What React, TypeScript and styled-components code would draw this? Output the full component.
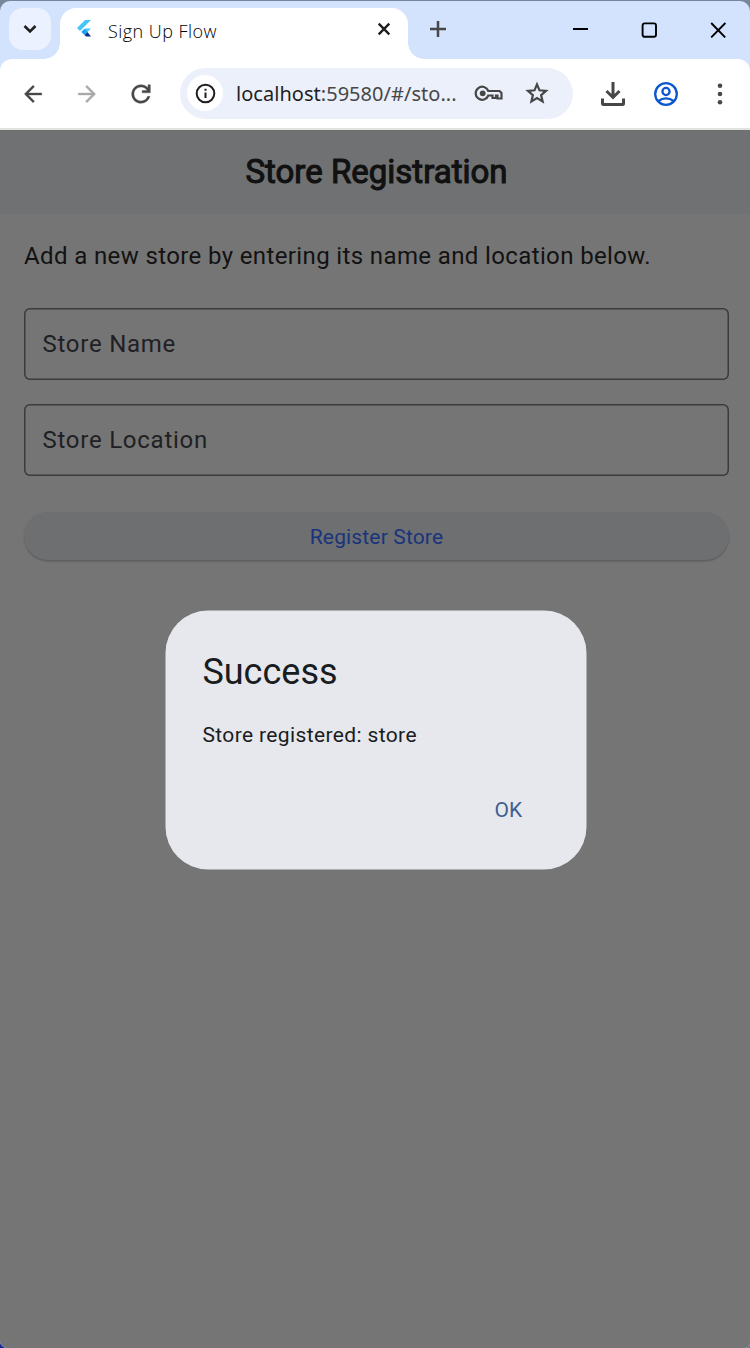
import React from "react";
import styled, { createGlobalStyle } from "styled-components";

const GlobalStyle = createGlobalStyle`
  * { box-sizing: border-box; }
  html, body { margin: 0; padding: 0; background: #75889b; }
  button { border: 0; padding: 0; background: none; font: inherit; }
  svg { display: block; flex: none; }
`;

const Desktop = styled.div`
  width: 750px;
  height: 1348px;
  padding-top: 1px;
  background: linear-gradient(90deg, #14249a 0 50%, #6d7690 50%) bottom / 100% 30px no-repeat #75889b;
`;

const BrowserWindow = styled.div`
  position: relative;
  height: 1347px;
  display: flex;
  flex-direction: column;
  border-radius: 10px 10px 5px 7px;
  overflow: hidden;
  background: #d3e2fd;
`;

const TabStrip = styled.div`
  height: 58px;
  display: flex;
  align-items: flex-end;
  padding-left: 9px;
`;

const TabSearch = styled.button`
  width: 42px;
  height: 42px;
  margin: 0 9px 9px 0;
  border-radius: 14px;
  background: #ebf1fe;
  display: grid;
  place-items: center;
`;

const Tab = styled.div`
  position: relative;
  width: 348px;
  height: 51px;
  display: flex;
  align-items: center;
  padding: 0 17px 9px 15px;
  border-radius: 16px 16px 0 0;
  background: #fff;
  &::before, &::after {
    content: "";
    position: absolute;
    bottom: 0;
    width: 16px;
    height: 16px;
  }
  &::before {
    left: -16px;
    background: radial-gradient(circle at 0 0, transparent 15.5px, #fff 16px);
  }
  &::after {
    right: -16px;
    background: radial-gradient(circle at 100% 0, transparent 15.5px, #fff 16px);
  }
`;

const TabTitle = styled.span`
  flex: 1;
  margin-left: 14px;
  padding-top: 4px;
  font: 300 18px/26px "Open Sans", sans-serif;
  letter-spacing: 0.45px;
  color: #000;
  white-space: nowrap;
`;

const NewTab = styled.button`
  margin: 0 0 22px 22px;
`;

const WindowControls = styled.div`
  margin: 0 24px 21px auto;
  display: flex;
  align-items: center;
  gap: 53px;
`;

const Toolbar = styled.div`
  height: 71px;
  flex: none;
  display: flex;
  align-items: center;
  padding: 1px 18px 0 20px;
  border-radius: 12px 12px 0 0;
  border-bottom: 2px solid #e1e3df;
  background: #fff;
`;

const ToolButton = styled.button<{ $gap?: number }>`
  margin-right: ${(p) => p.$gap ?? 0}px;
`;

const AddressBar = styled.div`
  width: 393px;
  height: 51px;
  margin: 0 28px 2px 0;
  display: flex;
  align-items: center;
  padding: 0 24px 0 7px;
  border-radius: 26px;
  background: #ebf0fa;
`;

const SiteInfo = styled.span`
  width: 36px;
  height: 36px;
  border-radius: 50%;
  display: grid;
  place-items: center;
  background: #fff;
`;

const Url = styled.span`
  flex: 1;
  margin-left: 13px;
  padding-top: 1px;
  font: 400 20px/28px "Noto Sans", sans-serif;
  letter-spacing: 0.03px;
  color: #474747;
  white-space: nowrap;
`;

const Host = styled.span`
  color: #1f1f1f;
`;

const Page = styled.main`
  position: relative;
  flex: 1;
  background: #757575;
  font-family: Roboto, sans-serif;
`;

const AppBar = styled.header`
  height: 84px;
  display: flex;
  align-items: center;
  justify-content: center;
  background: #707173;
`;

const AppTitle = styled.h1`
  margin: 0 0 0 3px;
  font-size: 33px;
  font-weight: 400;
  line-height: 42px;
  color: #111;
  -webkit-text-stroke: 1.1px #111;
`;

const Form = styled.div`
  display: flex;
  flex-direction: column;
  padding: 24px 21px 0 24px;
`;

const Intro = styled.p`
  margin: 0 0 34.4px;
  font-size: 24px;
  line-height: 36px;
  letter-spacing: 0.375px;
  color: #121212;
`;

const Field = styled.div`
  height: 72px;
  margin-bottom: 24px;
  padding: 0 18.5px;
  display: flex;
  align-items: center;
  box-shadow: inset 0 0 0 1.5px #3a3b3e;
  border-radius: 6px;
  font-size: 24px;
  letter-spacing: 0.75px;
  color: #1f2023;
`;

const RegisterButton = styled.button`
  height: 48px;
  margin-top: 11.6px;
  padding-top: 1px;
  border-radius: 24px;
  background: #6d6f71;
  box-shadow: 0 1.5px 1.5px rgba(0, 0, 0, 0.2);
  font-size: 21px;
  line-height: 48px;
  letter-spacing: 0.15px;
  color: #19347c;
`;

const Dialog = styled.section`
  position: absolute;
  left: 166.4px;
  top: 481.4px;
  width: 420px;
  height: 258px;
  padding: 37px 36px 35px;
  display: flex;
  flex-direction: column;
  border-radius: 42px;
  background: #e6e8ed;
  box-shadow: 0 0 0 0.5px #e6e8ed;
  color: #191c20;
`;

const DialogTitle = styled.h2`
  margin: 0 0 24px;
  font-size: 36px;
  font-weight: 400;
  line-height: 48px;
`;

const DialogText = styled.p`
  margin: 0;
  font-size: 21px;
  line-height: 30px;
  letter-spacing: 0.375px;
`;

const DialogAction = styled.button`
  align-self: flex-end;
  margin: 45px 28px 0 0;
  font-size: 21px;
  line-height: 30px;
  letter-spacing: 0.15px;
  color: #415f91;
`;

const ChevronIcon = () => (
  <svg width="14" height="10" viewBox="0 0 14 10" fill="none" stroke="#1f1f1f" strokeWidth="2.6">
    <path d="M1.500 2 7 7.500 12.500 2" />
  </svg>
);

const FlutterIcon = () => (
  <svg width="19" height="22" viewBox="0 0 19 22">
    <path fill="#47c5fb" d="M10 2h6L5 13l-3-3z" />
    <path fill="#47c5fb" d="M10 10.500h6L12.500 14h-6z" />
    <path fill="#0a2f8a" d="m9.500 17 3-3 3.500 4.500h-5z" />
    <path fill="#1b9ff0" d="m6.300 14 3-3 3.200 3-3 3z" />
  </svg>
);

const CloseTabIcon = () => (
  <svg width="14" height="14" viewBox="0 0 14 14" stroke="#1f1f1f" strokeWidth="2.4">
    <path d="m1.700 1.700 10.600 10.600M12.300 1.700 1.700 12.300" />
  </svg>
);

const PlusIcon = () => (
  <svg width="16" height="16" viewBox="0 0 16 16" stroke="#474747" strokeWidth="2.5">
    <path d="M8 0v16M0 8h16" />
  </svg>
);

const MinimizeIcon = () => (
  <svg width="16" height="16" viewBox="0 0 16 16" stroke="#000" strokeWidth="2">
    <path d="M1 7h15" />
  </svg>
);

const MaximizeIcon = () => (
  <svg width="16" height="16" viewBox="0 0 16 16" fill="none" stroke="#000" strokeWidth="1.9">
    <rect x="1.600" y="1.400" width="13.400" height="13.400" rx="2" />
  </svg>
);

const CloseIcon = () => (
  <svg width="16" height="16" viewBox="0 0 16 16" stroke="#000" strokeWidth="1.9">
    <path d="m1.200 1 14 14.400M15.400 1 1.200 15.400" />
  </svg>
);

const BackIcon = () => (
  <svg width="26" height="26" viewBox="0 0 24 24" fill="#474747" stroke="#474747" strokeWidth="0.300">
    <path d="M20 11H7.800l5.600-5.600L12 4l-8 8 8 8 1.400-1.400L7.800 13H20z" />
  </svg>
);

const ForwardIcon = () => (
  <svg width="26" height="26" viewBox="0 0 24 24" fill="#a9a9a9" stroke="#a9a9a9" strokeWidth="0.300">
    <path d="m12 4-1.400 1.400 5.600 5.600H4v2h12.200l-5.600 5.600L12 20l8-8z" />
  </svg>
);

const ReloadIcon = () => (
  <svg width="28" height="28" viewBox="0 0 24 24" fill="#474747" stroke="#474747" strokeWidth="0.300">
    <path d="M12 20c-4.500 0-8-3.500-8-8s3.500-8 8-8c2.300 0 4.400.950 6 2.700V4h2v7h-7V9h4.200C16.200 7.200 14.200 6 12 6c-3.300 0-6 2.700-6 6s2.700 6 6 6c2.600 0 4.800-1.600 5.650-4h2.100C18.800 17.500 15.700 20 12 20z" />
  </svg>
);

const InfoIcon = () => (
  <svg width="22" height="22" viewBox="0 0 22 22" fill="none" stroke="#1f1f1f" strokeWidth="2">
    <circle cx="11.500" cy="11.500" r="8.800" />
    <path d="M11.500 10.500V16M11.500 6.800v2" />
  </svg>
);

const KeyIcon = () => (
  <svg width="29" height="18" viewBox="0 0 29 18" fill="none" stroke="#474747" strokeWidth="2.200">
    <path d="M14.300 7h11.200l2 2v5.500h-4v-3H22V14h-3.500v-2.500h-4.200A6.500 6.500 0 1 1 14.300 7z" />
    <circle cx="8.700" cy="9.300" r="2.900" fill="#474747" stroke="none" />
  </svg>
);

const StarIcon = () => (
  <svg width="24" height="24" viewBox="0 0 24 24" fill="none" stroke="#474747" strokeWidth="2.200">
    <path d="m12 3.300 2.500 6 6.500.550-4.900 4.250 1.500 6.300L12 17l-5.600 3.400 1.500-6.300L3 9.850l6.500-.550z" />
  </svg>
);

const DownloadIcon = () => (
  <svg width="24" height="24" viewBox="0 0 24 24" fill="none" stroke="#474747" strokeWidth="3">
    <path d="M12 0v15M5.500 9 12 15.500 18.500 9" />
    <path d="M1.500 16.500v5a1 1 0 0 0 1 1h19a1 1 0 0 0 1-1v-5" />
  </svg>
);

const ProfileIcon = () => (
  <svg width="24" height="24" viewBox="0 0 24 24" fill="none" stroke="#0b57d0" strokeWidth="2.300">
    <circle cx="12" cy="12" r="10.800" />
    <circle cx="12" cy="9.500" r="3.600" />
    <path d="M4.500 19c4.500-3.400 10.500-3.400 15 0" />
  </svg>
);

const MenuIcon = () => (
  <svg width="24" height="22" viewBox="0 0 24 22" fill="#474747">
    <circle cx="12" cy="2.800" r="2.300" />
    <circle cx="12" cy="11" r="2.300" />
    <circle cx="12" cy="19.200" r="2.300" />
  </svg>
);

export default function App() {
  return (
    <Desktop>
      <GlobalStyle />
      <BrowserWindow>
        <TabStrip>
          <TabSearch><ChevronIcon /></TabSearch>
          <Tab>
            <FlutterIcon />
            <TabTitle>Sign Up Flow</TabTitle>
            <CloseTabIcon />
          </Tab>
          <NewTab><PlusIcon /></NewTab>
          <WindowControls>
            <MinimizeIcon />
            <MaximizeIcon />
            <CloseIcon />
          </WindowControls>
        </TabStrip>
        <Toolbar>
          <ToolButton $gap={28}><BackIcon /></ToolButton>
          <ToolButton $gap={27}><ForwardIcon /></ToolButton>
          <ToolButton $gap={25}><ReloadIcon /></ToolButton>
          <AddressBar>
            <SiteInfo><InfoIcon /></SiteInfo>
            <Url><Host>localhost</Host>:59580/#/sto...</Url>
            <ToolButton $gap={22}><KeyIcon /></ToolButton>
            <ToolButton><StarIcon /></ToolButton>
          </AddressBar>
          <ToolButton $gap={29}><DownloadIcon /></ToolButton>
          <ToolButton $gap={30}><ProfileIcon /></ToolButton>
          <ToolButton><MenuIcon /></ToolButton>
        </Toolbar>
        <Page>
          <AppBar><AppTitle>Store Registration</AppTitle></AppBar>
          <Form>
            <Intro>Add a new store by entering its name and location below.</Intro>
            <Field>Store Name</Field>
            <Field>Store Location</Field>
            <RegisterButton>Register Store</RegisterButton>
          </Form>
          <Dialog>
            <DialogTitle>Success</DialogTitle>
            <DialogText>Store registered: store</DialogText>
            <DialogAction>OK</DialogAction>
          </Dialog>
        </Page>
      </BrowserWindow>
    </Desktop>
  );
}
